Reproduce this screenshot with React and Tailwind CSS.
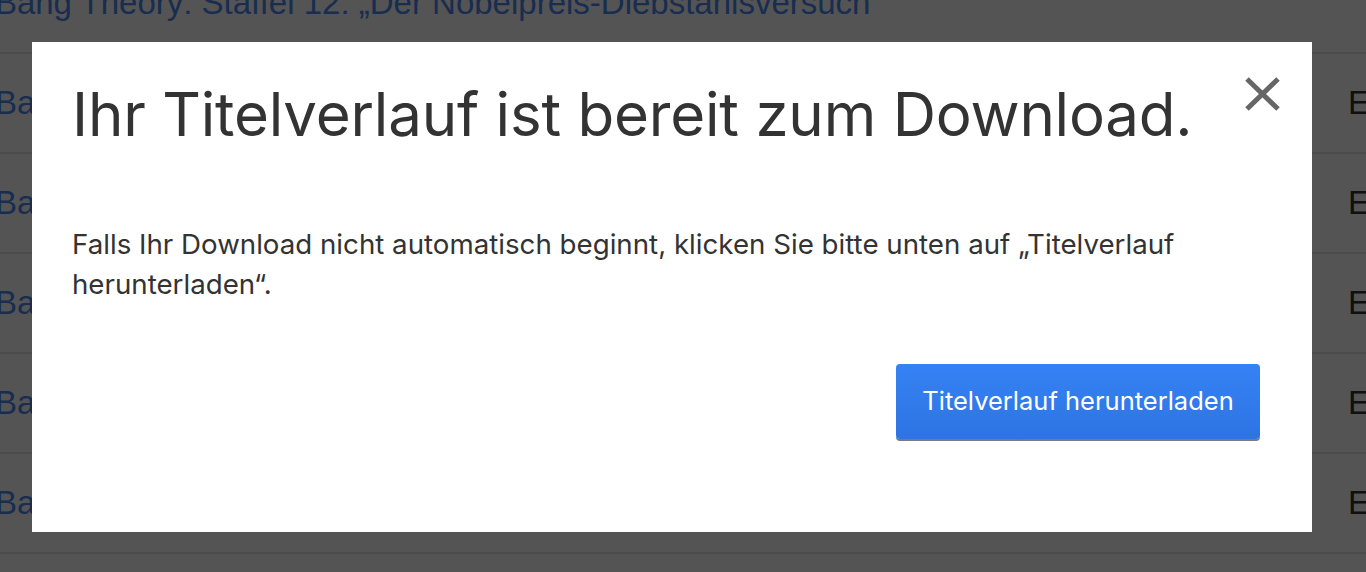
import React from "react";

const rows = [
  { title: "The Big Bang Theory: Staffel 12: „Der Nobelpreis-Diebstahlsversuch", date: "" },
  { title: "The Big Bang Theory: Staffel 12: „Die Ablenkungsstrategie“", date: "E" },
  { title: "The Big Bang Theory: Staffel 12: „Die Planetarium-Kollision“", date: "E" },
  { title: "The Big Bang Theory: Staffel 12: „Die Dekonstruktion“", date: "E" },
  { title: "The Big Bang Theory: Staffel 12: „Die Unterbrechung“", date: "E" },
  { title: "The Big Bang Theory: Staffel 12: „Die Fehlerkorrektur“", date: "E" },
  { title: "The Big Bang Theory: Staffel 12: „Die Matrix“", date: "E" },
];

export default function App() {
  return (
    <div className="relative h-[572px] w-[1366px] overflow-hidden bg-white">
      {/* background page */}
      <div className="mt-[-46px] ml-[-128px] w-[1620px]">
        {rows.map((r, i) => (
          <div
            key={i}
            className="flex h-[100px] items-center border-b-2 border-[#e2e2e2] font-['Liberation_Sans',Arial,sans-serif] text-[33px]"
          >
            <a className="w-[1476px] shrink-0 whitespace-nowrap text-[#4a88ee]">{r.title}</a>
            <span className="text-[#333333]">{r.date}</span>
          </div>
        ))}
      </div>

      {/* overlay */}
      <div className="absolute inset-0 bg-black/[0.67]" />

      {/* modal */}
      <div className="absolute left-[32px] top-[42px] flex h-[490px] w-[1280px] flex-col bg-white pl-[40px] pr-[52px] pt-[36px] font-['Inter',sans-serif] text-[#333333]">
        <button className="absolute right-[31px] top-[35px] h-[34px] w-[37px]">
          <svg viewBox="0 0 37 34" className="h-[34px] w-[37px]">
            <path d="M3 2 L34 32 M34 2 L3 32" stroke="#666666" strokeWidth="5" fill="none" />
          </svg>
        </button>
        <h1 className="text-[60px] leading-[72px] tracking-[-0.2px] font-normal">
          Ihr Titelverlauf ist bereit zum Download.
        </h1>
        <p className="mt-[74px] w-[1150px] text-[27.7px] leading-[40px]">
          Falls Ihr Download nicht automatisch beginnt, klicken Sie bitte unten auf „Titelverlauf herunterladen“.
        </p>
        <div className="mt-[60px] flex justify-end">
          <button className="h-[75px] w-[364px] rounded-[4px] bg-gradient-to-b from-[#3582f4] to-[#2e74e3] text-[25.5px] text-white shadow-[0_2px_0_#7a7a7a]">
            Titelverlauf herunterladen
          </button>
        </div>
      </div>
    </div>
  );
}
